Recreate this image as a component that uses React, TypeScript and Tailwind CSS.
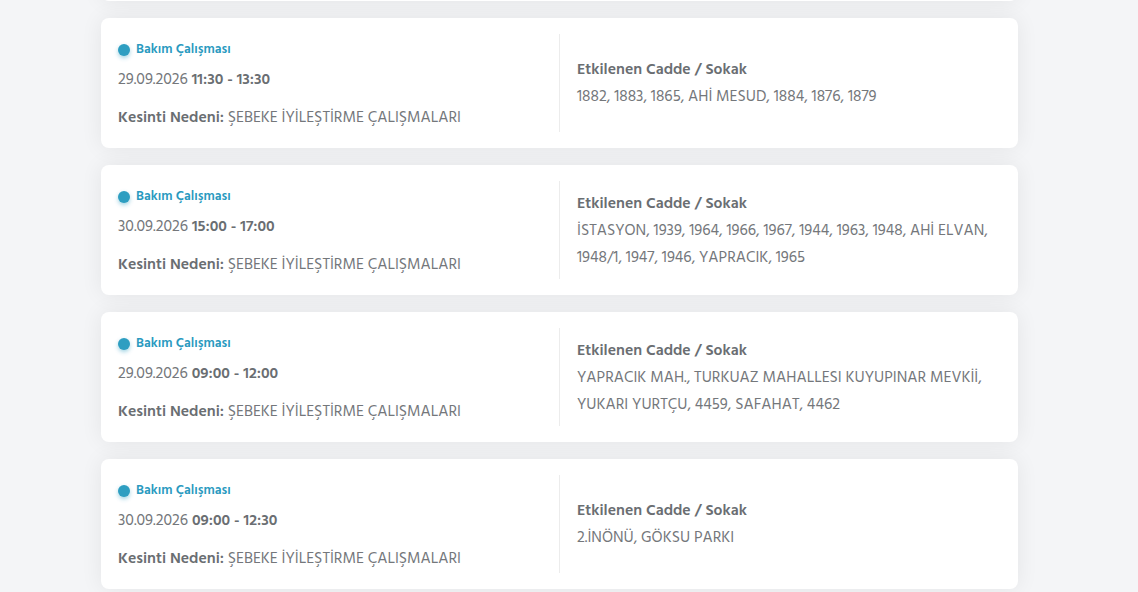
import React from 'react';

type Outage = {
    date: string;
    time: string;
    reason: string;
    streets: string;
};

const outages: Outage[] = [
    {
        date: '29.09.2026',
        time: '11:30 - 13:30',
        reason: 'ŞEBEKE İYİLEŞTİRME ÇALIŞMALARI',
        streets: '1882, 1883, 1865, AHİ MESUD, 1884, 1876, 1879',
    },
    {
        date: '30.09.2026',
        time: '15:00 - 17:00',
        reason: 'ŞEBEKE İYİLEŞTİRME ÇALIŞMALARI',
        streets: 'İSTASYON, 1939, 1964, 1966, 1967, 1944, 1963, 1948, AHİ ELVAN, 1948/1, 1947, 1946, YAPRACIK, 1965',
    },
    {
        date: '29.09.2026',
        time: '09:00 - 12:00',
        reason: 'ŞEBEKE İYİLEŞTİRME ÇALIŞMALARI',
        streets: 'YAPRACIK MAH., TURKUAZ MAHALLESI KUYUPINAR MEVKİİ, YUKARI YURTÇU, 4459, SAFAHAT, 4462',
    },
    {
        date: '30.09.2026',
        time: '09:00 - 12:30',
        reason: 'ŞEBEKE İYİLEŞTİRME ÇALIŞMALARI',
        streets: '2.İNÖNÜ, GÖKSU PARKI',
    },
];

const OutageCard: React.FC<{ item: Outage }> = ({ item }) => (
    <div className="bg-white rounded-lg shadow-[0_0_22px_rgba(0,0,0,0.07)] h-[130px] py-4 px-[17px] flex">
        <div className="w-[441px] shrink-0 flex flex-col pt-[6px]">
            <div className="flex items-center gap-[6px] h-5">
                <span className="w-3 h-3 rounded-full bg-[#2e9ec1] shadow-[0_2px_4px_rgba(46,158,193,0.45)]" />
                <span className="text-[13.4px] font-semibold text-[#2a9ac0]">Bakım Çalışması</span>
            </div>
            <div className="mt-[10px] text-[15.75px] leading-5 text-[#74777b]">
                {item.date} <span className="font-semibold text-[#6a6e72]">{item.time}</span>
            </div>
            <div className="mt-[18px] text-[15.75px] leading-5 text-[#74777b]">
                <span className="font-semibold text-[#6a6e72]">Kesinti Nedeni:</span> {item.reason}
            </div>
        </div>
        <div className="flex-1 border-l border-[#ececec] pl-[17px] flex flex-col justify-center pt-[2px]">
            <div className="text-[15.75px] font-semibold leading-[27px] text-[#6a6e72]">Etkilenen Cadde / Sokak</div>
            <div className="text-[15.75px] leading-[27px] text-[#74777b]">{item.streets}</div>
        </div>
    </div>
);

export default function App() {
    return (
        <div className="h-[592px] overflow-hidden bg-[#f4f5f7] font-['Hind','Open_Sans','Noto_Sans',sans-serif]">
            <div className="w-[917px] ml-[101px] flex flex-col gap-[17px] -mt-[112px]">
                <div className="bg-white rounded-lg shadow-[0_0_22px_rgba(0,0,0,0.07)] h-[113px]" />
                {outages.map((o, i) => (
                    <OutageCard key={i} item={o} />
                ))}
            </div>
        </div>
    );
}
